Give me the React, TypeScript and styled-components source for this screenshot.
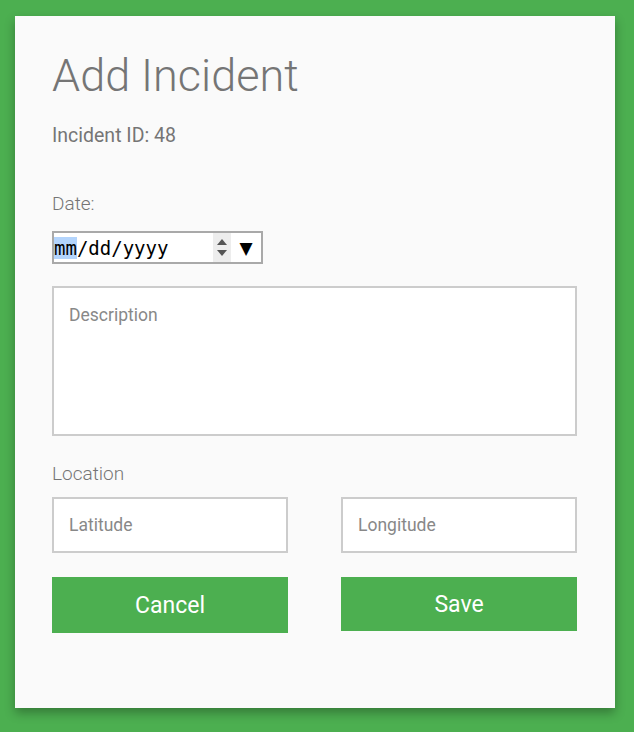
import React from "react";
import styled, { createGlobalStyle } from "styled-components";

const Global = createGlobalStyle`
  html, body { margin: 0; padding: 0; background: #4caf50; }
  body { font-family: Roboto, "Noto Sans", sans-serif; }
  * { box-sizing: border-box; }
`;

const Page = styled.div`
  min-height: 732px;
  padding: 16px 19px 24px 15px;
`;

const Card = styled.div`
  width: 600px;
  height: 692px;
  background: #fafafa;
  box-shadow: 0 5px 10px rgba(0, 0, 0, 0.3);
  padding: 37px 38px 0 37px;
  display: flex;
  flex-direction: column;
`;

const Title = styled.h1`
  margin: 0;
  font-family: Roboto, sans-serif;
  font-weight: 300;
  font-size: 45px;
  line-height: 46px;
  color: #757575;
`;

const IdLine = styled.div`
  margin-top: 27px;
  font-size: 19.5px;
  line-height: 19px;
  color: #757575;
`;

const Label = styled.div<{ $top: number }>`
  margin-top: ${(p) => p.$top}px;
  font-size: 19px;
  line-height: 19px;
  font-weight: 300;
  color: #757575;
`;

const DateBox = styled.div`
  margin-top: 18px;
  width: 211px;
  height: 33px;
  border: 2px solid #a9a9a9;
  background: #fff;
  display: flex;
  align-items: stretch;
  font-family: "DejaVu Sans Mono", monospace;
  font-size: 19px;
  color: #000;
`;

const DateText = styled.div`
  flex: 1;
  display: flex;
  align-items: center;
  white-space: pre;
`;

const Selected = styled.span`
  background: #b3d4fc;
`;

const Spinner = styled.div`
  width: 18px;
  background: #ededed;
  display: flex;
  flex-direction: column;
  align-items: center;
  justify-content: center;
  gap: 5px;
`;

const Drop = styled.div`
  width: 30px;
  display: flex;
  align-items: center;
  justify-content: center;
  font-family: "DejaVu Sans", sans-serif;
  font-size: 17px;
`;

const TextArea = styled.div`
  margin-top: 22px;
  height: 150px;
  border: 2px solid #cccccc;
  background: #fff;
  padding: 17px 15px;
  font-size: 17.5px;
  line-height: 20px;
  color: #888;
`;

const Row = styled.div<{ $top: number }>`
  margin-top: ${(p) => p.$top}px;
  display: flex;
  justify-content: space-between;
  align-items: flex-start;
`;

const Field = styled.div`
  width: 236px;
  height: 56px;
  border: 2px solid #cccccc;
  background: #fff;
  padding: 0 15px;
  display: flex;
  align-items: center;
  font-size: 17.5px;
  color: #888;
`;

const Button = styled.div<{ $h: number }>`
  width: 236px;
  height: ${(p) => p.$h}px;
  background: #4caf50;
  color: #fff;
  display: flex;
  align-items: center;
  justify-content: center;
  font-size: 23px;
`;

export default function App() {
  return (
    <Page>
      <Global />
      <Card>
        <Title>Add Incident</Title>
        <IdLine>Incident ID: 48</IdLine>
        <Label $top={49}>Date:</Label>
        <DateBox>
          <DateText>
            <Selected>mm</Selected>/dd/yyyy
          </DateText>
          <Spinner>
            <svg width="10" height="6" viewBox="0 0 10 6">
              <path d="M0 6 L5 0 L10 6 Z" fill="#555" />
            </svg>
            <svg width="10" height="6" viewBox="0 0 10 6">
              <path d="M0 0 L5 6 L10 0 Z" fill="#555" />
            </svg>
          </Spinner>
          <Drop>▼</Drop>
        </DateBox>
        <TextArea>Description</TextArea>
        <Label $top={28}>Location</Label>
        <Row $top={14}>
          <Field>Latitude</Field>
          <Field>Longitude</Field>
        </Row>
        <Row $top={24}>
          <Button $h={56}>Cancel</Button>
          <Button $h={54}>Save</Button>
        </Row>
      </Card>
    </Page>
  );
}
